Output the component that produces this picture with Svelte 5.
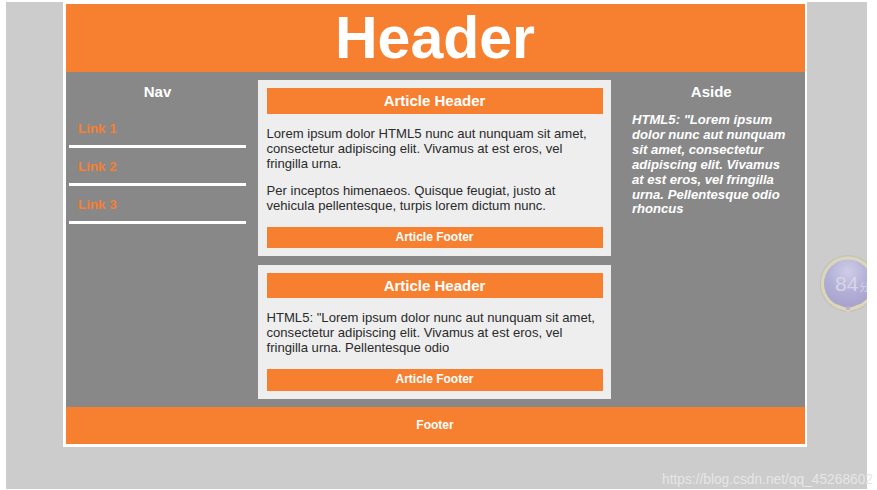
<script>
	const links = ['Link 1', 'Link 2', 'Link 3'];
	const articles = [
		{
			paragraphs: [
				'Lorem ipsum dolor HTML5 nunc aut nunquam sit amet, consectetur adipiscing elit. Vivamus at est eros, vel fringilla urna.',
				'Per inceptos himenaeos. Quisque feugiat, justo at vehicula pellentesque, turpis lorem dictum nunc.'
			]
		},
		{
			paragraphs: [
				'HTML5: "Lorem ipsum dolor nunc aut nunquam sit amet, consectetur adipiscing elit. Vivamus at est eros, vel fringilla urna. Pellentesque odio'
			]
		}
	];
</script>

<div class="page">
	<div class="wrap">
		<header class="top">Header</header>
		<div class="columns">
			<nav class="nav">
				<h2>Nav</h2>
				<ul>
					{#each links as link}
						<li><a href="#top">{link}</a></li>
					{/each}
				</ul>
			</nav>
			<main class="content">
				{#each articles as article}
					<article>
						<h3>Article Header</h3>
						{#each article.paragraphs as text}
							<p>{text}</p>
						{/each}
						<footer>Article Footer</footer>
					</article>
				{/each}
			</main>
			<aside class="aside">
				<h2>Aside</h2>
				<p>HTML5: "Lorem ipsum dolor nunc aut nunquam sit amet, consectetur adipiscing elit. Vivamus at est eros, vel fringilla urna. Pellentesque odio rhoncus</p>
			</aside>
		</div>
		<footer class="bottom">Footer</footer>
	</div>

	<div class="badge">
		<svg width="60" height="60" viewBox="0 0 60 60">
			<defs>
				<radialGradient id="orb" cx="50%" cy="25%" r="75%">
					<stop offset="0" stop-color="#cfcde6" />
					<stop offset="0.55" stop-color="#b3b0d8" />
					<stop offset="1" stop-color="#a5a2cc" />
				</radialGradient>
			</defs>
			<circle cx="29" cy="28.5" r="28.5" fill="#c4c4bc" />
			<circle cx="29" cy="28.5" r="27" fill="#dcd6ba" />
			<circle cx="29" cy="28.5" r="24" fill="url(#orb)" />
			<path d="M17 50q7 2 12 6q5-4 12-6" fill="none" stroke="#dcd6ba" stroke-width="2" />
			<circle cx="29" cy="53" r="2" fill="#c8a8cc" />
		</svg>
		<span class="score">84<small>分</small></span>
	</div>
	<span class="watermark">https://blog.csdn.net/qq_45268602</span>
</div>

<style>
	:global(body) {
		margin: 0;
		background: #fff;
		font-family: "Liberation Sans", Arial, sans-serif;
		overflow: hidden;
	}

	.page {
		position: relative;
		box-sizing: border-box;
		width: 861px;
		height: 487px;
		margin: 2px 0 0 6px;
		padding-left: 57px;
		background: #cccccc;
	}

	.wrap {
		box-sizing: border-box;
		width: 744px;
		padding: 2px 2.5px 3px;
		background: #fff;
	}

	.top {
		height: 68px;
		background: #f77f30;
		color: #fff;
		font-size: 59px;
		font-weight: 700;
		line-height: 68px;
		text-align: center;
	}

	.columns {
		display: flex;
		height: 335px;
		background: #888888;
		color: #fff;
	}

	.nav {
		box-sizing: border-box;
		width: 192.5px;
		padding: 0 12px 0 3.5px;
	}

	h2 {
		margin: 0;
		padding-top: 12px;
		font-size: 15px;
		line-height: 16px;
		text-align: center;
	}

	ul {
		margin: 10px 0 0;
		padding: 0;
		list-style: none;
	}

	li {
		box-sizing: border-box;
		height: 38px;
		padding: 9px 9px 0;
		border-bottom: 3px solid #fff;
	}

	a {
		color: #f77f30;
		font-size: 13.4px;
		font-weight: 700;
		line-height: 17px;
		text-decoration: none;
	}

	.content {
		display: flex;
		flex-direction: column;
		gap: 8.5px;
		width: 353px;
		padding-top: 8px;
	}

	article {
		box-sizing: border-box;
		padding: 8px 8.5px;
		background: #eeeeee;
		color: #2a2a2a;
	}

	h3 {
		margin: 0;
		height: 25.5px;
		background: #f77f30;
		color: #fff;
		font-size: 15px;
		line-height: 25px;
		text-align: center;
	}

	article p {
		margin: 12px 0;
		font-size: 13.1px;
		line-height: 15px;
	}

	article footer {
		height: 21.5px;
		margin-top: 14px;
		background: #f77f30;
		color: #fff;
		font-size: 12px;
		font-weight: 700;
		line-height: 21.5px;
		text-align: center;
	}

	.aside {
		flex: 1;
		box-sizing: border-box;
		padding: 0 14px 0 21px;
	}

	.aside p {
		margin: 13px 0 0;
		font-size: 13.1px;
		font-style: italic;
		font-weight: 700;
		line-height: 14.9px;
	}

	.bottom {
		height: 37px;
		background: #f77f30;
		color: #fff;
		font-size: 12px;
		font-weight: 700;
		line-height: 37px;
		text-align: center;
	}

	.badge {
		position: absolute;
		top: 253px;
		left: 813px;
		width: 48px;
		height: 60px;
		overflow: hidden;
	}

	.badge svg {
		display: block;
	}

	.score {
		position: absolute;
		top: 18px;
		left: 16px;
		color: #d6d5e6;
		font-size: 21px;
		line-height: 22px;
		white-space: nowrap;
	}

	.score small {
		margin-left: 1px;
		font-family: "Noto Sans CJK SC", sans-serif;
		font-size: 10px;
	}

	.watermark {
		position: absolute;
		top: 469px;
		left: 656px;
		color: #e6e6e6;
		font-size: 13.75px;
		line-height: 17px;
		white-space: nowrap;
	}
</style>
